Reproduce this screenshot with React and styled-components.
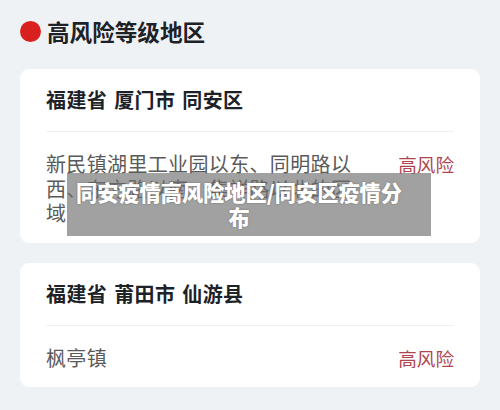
import React from "react";
import styled, { createGlobalStyle } from "styled-components";

const Global = createGlobalStyle`
  html, body { margin: 0; padding: 0; background: #eff2f5; }
  body { font-family: "Noto Sans CJK SC", "Noto Sans", sans-serif; }
`;

const Page = styled.div`
  position: relative;
  width: 500px;
  height: 410px;
  box-sizing: border-box;
  padding: 0 20px;
  background: #eff2f5;
  overflow: hidden;
`;

const Header = styled.div`
  display: flex;
  align-items: center;
  gap: 6px;
  height: 63px;
`;

const Dot = styled.span`
  width: 21px;
  height: 21px;
  border-radius: 50%;
  background: #d8201f;
  flex: none;
`;

const HeaderTitle = styled.h1`
  margin: 0;
  font-size: 22.6px;
  font-weight: 700;
  color: #1d2228;
  line-height: 30px;
`;

const List = styled.div`
  display: flex;
  flex-direction: column;
  gap: 20px;
  margin-top: 6px;
`;

const Card = styled.section`
  background: #ffffff;
  border-radius: 9px;
  padding: 0 26px;
`;

const CardTitle = styled.div`
  padding: 18px 0;
  font-size: 20px;
  font-weight: 700;
  letter-spacing: 0.4px;
  line-height: 26px;
  color: #1d2228;
  border-bottom: 1px solid #eeeff1;
  word-spacing: 2px;
`;

const Row = styled.div`
  display: flex;
  justify-content: space-between;
  align-items: flex-start;
  padding: 20px 0 17px;
`;

const Address = styled.div`
  max-width: 312px;
  font-size: 20px;
  letter-spacing: 0.35px;
  line-height: 24.5px;
  color: #5a5a5a;
`;

const Level = styled.div`
  font-size: 18.6px;
  line-height: 24.5px;
  color: #b0444e;
  flex: none;
`;

const Caption = styled.div`
  position: absolute;
  left: 67px;
  top: 173px;
  width: 364px;
  height: 63px;
  box-sizing: border-box;
  padding: 6px 25px 0 5px;
  background: rgba(112, 112, 112, 0.66);
  color: #ffffff;
  font-size: 21.2px;
  font-weight: 900;
  line-height: 25px;
  text-align: center;
  text-shadow: 0 0 2px rgba(0, 0, 0, 0.35);
`;

const areas = [
  {
    title: "福建省 厦门市 同安区",
    address: "新民镇湖里工业园以东、同明路以西、东方路以南、集祥路以北的区域",
  },
  { title: "福建省 莆田市 仙游县", address: "枫亭镇" },
];

export default function App() {
  return (
    <>
      <Global />
      <Page>
        <Header>
          <Dot />
          <HeaderTitle>高风险等级地区</HeaderTitle>
        </Header>
        <List>
          {areas.map((a) => (
            <Card key={a.title}>
              <CardTitle>{a.title}</CardTitle>
              <Row>
                <Address>{a.address}</Address>
                <Level>高风险</Level>
              </Row>
            </Card>
          ))}
        </List>
        <Caption>同安疫情高风险地区/同安区疫情分布</Caption>
      </Page>
    </>
  );
}
